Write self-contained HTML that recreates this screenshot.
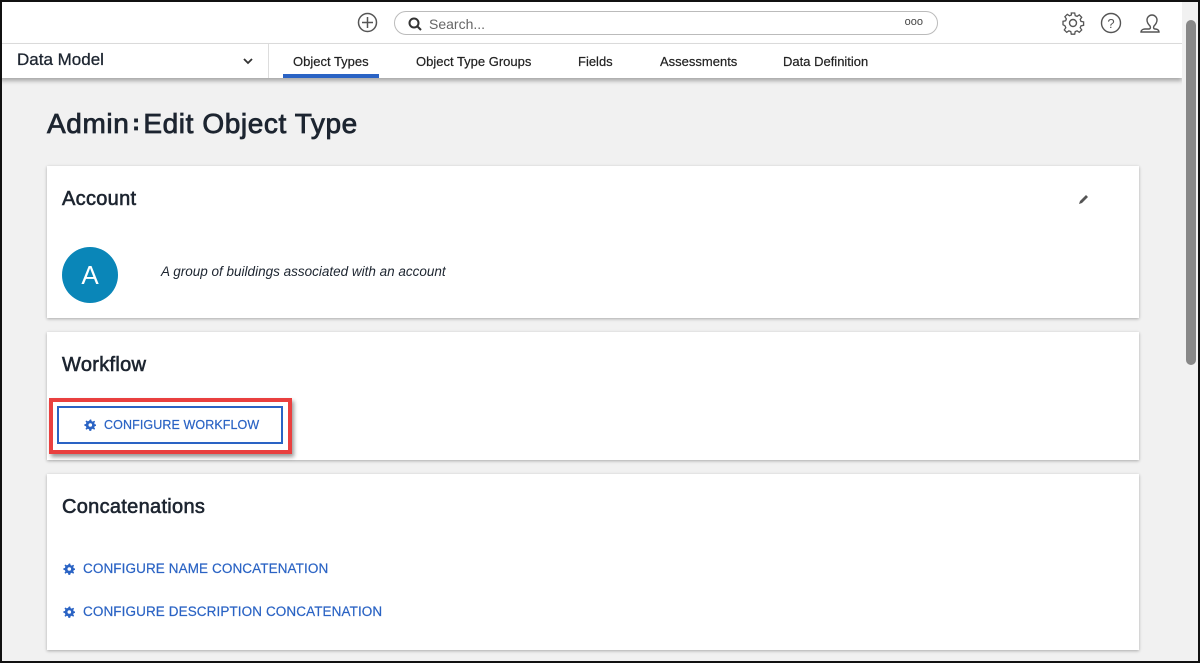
<!DOCTYPE html>
<html><head><style>
*{box-sizing:border-box;margin:0;padding:0}
body{width:1200px;height:663px;overflow:hidden;background:#f1f1f1;font-family:"Liberation Sans",sans-serif;position:relative;color:#1d2530}
.frame{position:absolute;inset:0;border:2px solid #111;z-index:10;pointer-events:none}
.top{position:absolute;left:0;top:0;width:1182px;height:44px;background:#fff;border-bottom:1px solid #ddd}
.nav{position:absolute;left:0;top:44px;width:1182px;height:34px;background:#fff;box-shadow:0 3px 4px rgba(0,0,0,.3)}
.search{position:absolute;left:394px;top:11px;width:544px;height:24px;border:1px solid #bbb;border-radius:12px;font-size:14px;color:#666;padding:4px 0 0 34px}
.tab{position:absolute;top:10px;font-size:13px;color:#222;-webkit-text-stroke:.2px #222}
.card{position:absolute;left:47px;width:1092px;background:#fff;box-shadow:0 1px 3px rgba(0,0,0,.3)}
h2{position:absolute;left:15px;font-size:20px;letter-spacing:.3px;font-weight:normal;color:#1d2530;-webkit-text-stroke:.6px #1d2530}
.link{position:absolute;left:16px;font-size:13.5px;color:#2a63c4;display:flex;align-items:center;gap:8px;-webkit-text-stroke:.2px #2a63c4;letter-spacing:.1px}
.sb{position:absolute;left:1182px;top:0;width:18px;height:663px;background:#f1f1f1}
</style></head><body>
<svg width="0" height="0" style="position:absolute"><defs><g id="g"><path d="M6 0.5l1.2 0 .4 1.6 1.2.5 1.4-.9.9.9-.9 1.4.5 1.2 1.6.4v1.2l-1.6.4-.5 1.2.9 1.4-.9.9-1.4-.9-1.2.5-.4 1.6H5.4l-.4-1.6-1.2-.5-1.4.9-.9-.9.9-1.4-.5-1.2L.3 6.6V5.4l1.6-.4.5-1.2-.9-1.4.9-.9 1.4.9 1.2-.5z" fill="#2a63c4"/><circle cx="6.3" cy="6" r="1.8" fill="#fff"/></g></defs></svg>
<div class="frame"></div>
<div class="top">
<svg style="position:absolute;left:357px;top:12px" width="21" height="21"><circle cx="10.5" cy="10.5" r="9" fill="none" stroke="#555" stroke-width="1.5"/><path d="M10.5 5v11M5 10.5h11" stroke="#555" stroke-width="1.5"/></svg>
<div class="search">Search...
<svg style="position:absolute;left:13px;top:5px" width="14" height="14"><circle cx="6" cy="6" r="4.5" fill="none" stroke="#333" stroke-width="2"/><path d="M9 9l4 4" stroke="#333" stroke-width="2"/></svg>
<span style="position:absolute;right:14px;top:4px;font-size:11px;color:#444">ooo</span></div>
<svg style="position:absolute;left:1061px;top:11px" width="24" height="24"><path d="M10.3 2h3.4l.5 2.6 1.9.8 2.2-1.5 2.4 2.4-1.5 2.2.8 1.9 2.6.5v3.4l-2.6.5-.8 1.9 1.5 2.2-2.4 2.4-2.2-1.5-1.9.8-.5 2.6h-3.4l-.5-2.6-1.9-.8-2.2 1.5-2.4-2.4 1.5-2.2-.8-1.9L2 13.7v-3.4l2.6-.5.8-1.9-1.5-2.2 2.4-2.4 2.200 1.5 1.9-.8z" fill="none" stroke="#555" stroke-width="1.3"/><circle cx="12" cy="12" r="3.5" fill="none" stroke="#555" stroke-width="1.4"/></svg>
<svg style="position:absolute;left:1100px;top:12px" width="22" height="22"><circle cx="11" cy="11" r="9.5" fill="none" stroke="#555" stroke-width="1.4"/><text x="11" y="16" font-size="13" text-anchor="middle" fill="#555" font-family="Liberation Sans">?</text></svg>
<svg style="position:absolute;left:1138px;top:11px" width="24" height="24"><path d="M7 18c-4 0-4 3-4 3h18s0-3-4-3c-1 0-2-1-1-3 2-2 3-4 3-6a5 5 0 0 0-10 0c0 2 1 4 3 6 1 2 0 3-1 3z" fill="none" stroke="#555" stroke-width="1.4"/></svg>
</div>
<div class="nav">
<span style="position:absolute;left:17px;top:6px;font-size:17px;-webkit-text-stroke:.3px #1d2530">Data Model</span>
<svg style="position:absolute;left:243px;top:14px" width="10" height="7"><path d="M1 1l4 4 4-4" fill="none" stroke="#333" stroke-width="1.8"/></svg>
<div style="position:absolute;left:268px;top:0;width:1px;height:34px;background:#ddd"></div>
<span class="tab" style="left:293px">Object Types</span>
<div style="position:absolute;left:283px;top:30px;width:96px;height:4px;background:#2a63c4"></div>
<span class="tab" style="left:416px">Object Type Groups</span>
<span class="tab" style="left:578px">Fields</span>
<span class="tab" style="left:660px">Assessments</span>
<span class="tab" style="left:783px">Data Definition</span>
</div>
<div style="position:absolute;left:47px;top:108px;font-size:28px;letter-spacing:.6px;color:#1d2530;-webkit-text-stroke:.8px #1d2530">Admin<b style="font-size:22px;position:relative;top:-3px;margin:0 3px">:</b>Edit Object Type</div>
<div class="card" style="top:166px;height:152px">
<h2 style="top:22px">Account</h2>
<svg style="position:absolute;left:1031px;top:27px" width="12" height="12"><path d="M1 11l1-3 6-6 2 2-6 6z" fill="#555"/></svg>
<div style="position:absolute;left:15px;top:81px;width:56px;height:56px;border-radius:50%;background:#0a86b8;color:#fff;font-size:26px;text-align:center;line-height:56px">A</div>
<span style="position:absolute;left:114px;top:98px;font-size:13.5px;font-style:italic">A group of buildings associated with an account</span>
</div>
<div class="card" style="top:332px;height:128px">
<h2 style="top:22px">Workflow</h2>
</div>
<div style="position:absolute;left:49px;top:398px;width:243px;height:56px;border:4px solid #e9403f;background:#fff;box-shadow:2px 3px 4px rgba(0,0,0,.4)"></div>
<div style="position:absolute;left:57px;top:406px;width:226px;height:38px;border:2px solid #2a63c4;background:#fff"></div>
<div class="link" style="left:84px;top:418px;font-size:12.5px"><svg width="12" height="12"><use href="#g"/></svg>CONFIGURE WORKFLOW</div>
<div class="card" style="top:474px;height:176px">
<h2 style="top:22px">Concatenations</h2>
<div class="link" style="top:87px"><svg width="12" height="12"><use href="#g"/></svg>CONFIGURE NAME CONCATENATION</div>
<div class="link" style="top:130px"><svg width="12" height="12"><use href="#g"/></svg>CONFIGURE DESCRIPTION CONCATENATION</div>
</div>
<div class="sb"><div style="position:absolute;left:4px;top:20px;width:10px;height:345px;border-radius:5px;background:#888"></div></div>
</body></html>
